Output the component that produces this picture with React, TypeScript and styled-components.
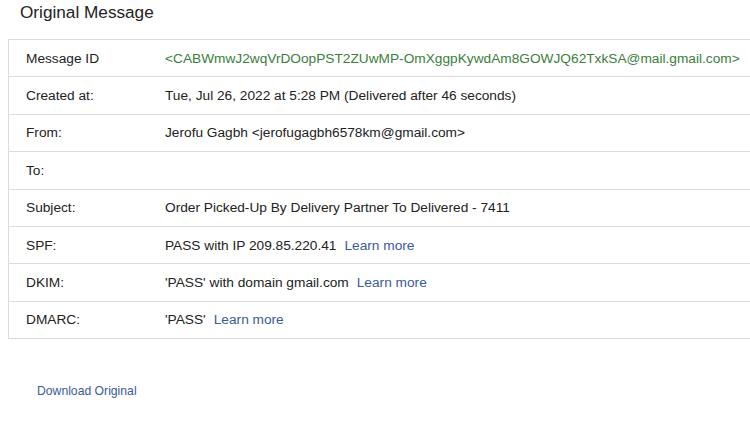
import React from "react";
import styled, { createGlobalStyle } from "styled-components";

const Global = createGlobalStyle`
  html, body { margin: 0; padding: 0; background: #fff; overflow: hidden; }
  body { font-family: Arial, "Liberation Sans", sans-serif; color: #222; }
`;

const Page = styled.div`
  width: 760px;
  padding: 0 0 0 8px;
`;

const Title = styled.h1`
  margin: 0;
  padding: 1px 0 0 12px;
  height: 39px;
  box-sizing: border-box;
  font-size: 17.2px;
  font-weight: normal;
  line-height: 22px;
  color: #222;
`;

const Table = styled.div`
  border: 1px solid #dcdcdc;
  border-right: none;
  width: 760px;
`;

const Row = styled.div`
  display: grid;
  grid-template-columns: 139px 1fr;
  align-items: center;
  height: 36.4px;
  padding-left: 17px;
  font-size: 13.7px;
  border-top: 1px solid #dcdcdc;
  &:first-child { border-top: none; }
`;

const Label = styled.div`
  color: #222;
`;

const Value = styled.div<{ $tone?: "id" }>`
  color: ${(p) => (p.$tone === "id" ? "#3b7d3b" : "#222")};
  white-space: nowrap;
`;

const More = styled.a`
  color: #3b5a9a;
  text-decoration: none;
  margin-left: 8px;
`;

const Footer = styled.div`
  padding: 42px 0 0 29px;
`;

const Download = styled.a`
  font-size: 12.2px;
  color: #3b5a9a;
  text-decoration: none;
`;

const rows: { label: string; value: string; tone?: "id"; more?: boolean }[] = [
  {
    label: "Message ID",
    value: "<CABWmwJ2wqVrDOopPST2ZUwMP-OmXggpKywdAm8GOWJQ62TxkSA@mail.gmail.com>",
    tone: "id",
  },
  { label: "Created at:", value: "Tue, Jul 26, 2022 at 5:28 PM (Delivered after 46 seconds)" },
  { label: "From:", value: "Jerofu Gagbh <jerofugagbh6578km@gmail.com>" },
  { label: "To:", value: "" },
  { label: "Subject:", value: "Order Picked-Up By Delivery Partner To Delivered - 7411" },
  { label: "SPF:", value: "PASS with IP 209.85.220.41", more: true },
  { label: "DKIM:", value: "'PASS' with domain gmail.com", more: true },
  { label: "DMARC:", value: "'PASS'", more: true },
];

export default function App() {
  return (
    <>
      <Global />
      <Page>
        <Title>Original Message</Title>
        <Table>
          {rows.map((r) => (
            <Row key={r.label}>
              <Label>{r.label}</Label>
              <Value $tone={r.tone}>
                {r.value}
                {r.more && <More href="#">Learn more</More>}
              </Value>
            </Row>
          ))}
        </Table>
        <Footer>
          <Download href="#">Download Original</Download>
        </Footer>
      </Page>
    </>
  );
}
